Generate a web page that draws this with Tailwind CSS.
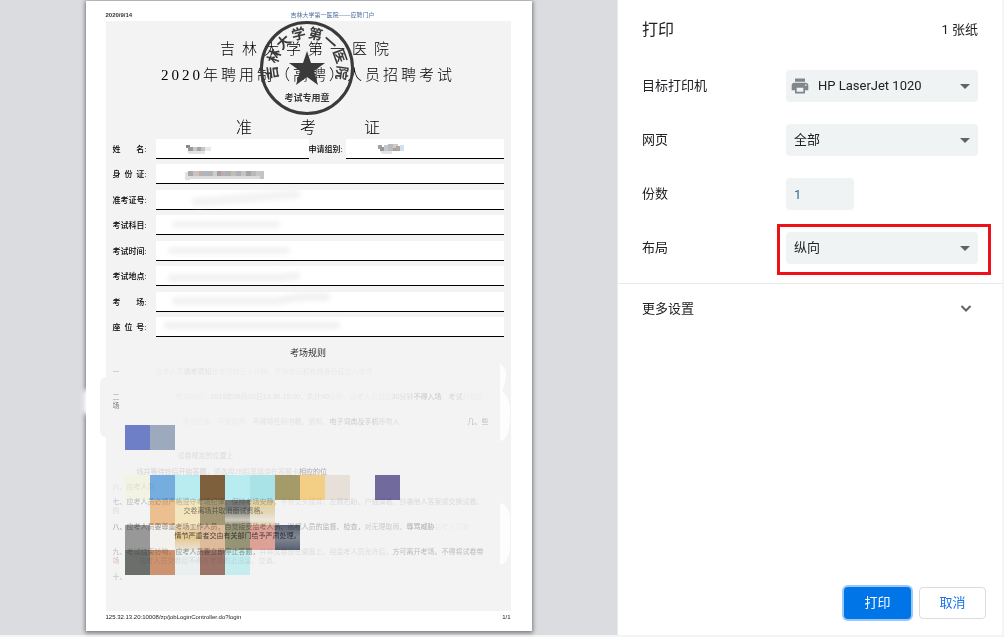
<!DOCTYPE html>
<html lang="zh-CN">
<head>
  <meta charset="UTF-8" />
  <meta name="viewport" content="width=device-width, initial-scale=1.0"/>
  <title>打印</title>
  <script src="https://cdn.jsdelivr.net/npm/@tailwindcss/browser@4"></script>
</head>
<body class="bg-[#f4f4f4] pr-[2px] pb-[2px] min-h-screen flex font-['Roboto','Noto_Sans_CJK_SC',sans-serif] text-[#202124]">

  <!-- Preview -->
  <main class="flex-1 bg-[#dadce0] border-r border-[#e8eaed] pt-px pb-1">
    <article class="relative w-[446px] min-h-[630px] mx-auto bg-white pl-5 pr-[21px] flex flex-col shadow-[0_1px_4px_1px_rgba(0,0,0,0.45)] font-['Liberation_Sans','Noto_Sans_CJK_SC',sans-serif]">
      <header class="h-5 pt-2 flex text-[6px] leading-[12px] text-black">
        <span class="w-[185px] font-bold text-[#333]">2020/9/14</span>
        <span class="text-[#4a6a9a]">吉林大学第一医院——应聘门户</span>
      </header>

      <section class="flex-1 bg-[#f3f3f3] pt-[15px] px-[7px]">
        <h1 class="text-center text-[15px] leading-[26px] text-black font-light font-['Liberation_Serif','Noto_Sans_CJK_SC',serif]">
          <span class="block tracking-[7px]">吉林大学第一医院</span>
          <span class="block tracking-[3px]">2020年聘用制（高聘）人员招聘考试</span>
        </h1>
        <h2 class="flex justify-center gap-12 mt-[30px] mb-px text-[16px] leading-[20px] font-light text-black"><span>准</span><span>考</span><span>证</span></h2>

        <!-- Form lines -->
        <dl class="h-[198px] flex flex-col justify-between text-[8px] leading-[22px] text-black font-medium">
          <div class="flex h-5">
            <dt class="w-[43px] pr-[9px] flex justify-between"><span>姓</span><span>名:</span></dt>
            <dd class="w-[153px] bg-white border-b border-black pl-7 pt-1">
              <svg width="30" height="12" viewBox="0 0 30 12"><path d="M2 2h4v3H2z" fill="#888"/><path d="M4 4h5v4H4z" fill="#999"/><path d="M9 4h4v4H9z" fill="#c5cad0"/><path d="M13 4h4v4h-4z" fill="#a5a5a5"/><path d="M17 4h4v4h-4z" fill="#c4c4c4"/><path d="M21 4h6v4h-6z" fill="#e8e8e8"/><path d="M3 8h18v3H5z" fill="#e2e4e6"/></svg>
            </dd>
            <dt class="w-[37px]">申请组别:</dt>
            <dd class="flex-1 bg-white border-b border-black pl-8 pt-1">
              <svg width="30" height="12" viewBox="0 0 30 12"><path d="M0 2h4v4H0z" fill="#b59a90"/><path d="M2 4h4v4H2z" fill="#8d99a5"/><path d="M6 2h4v6H6z" fill="#c4c8cc"/><path d="M10 1h5v7h-5z" fill="#bbb"/><path d="M15 1h5v4h-5z" fill="#ccc"/><path d="M15 5h3v3h-3z" fill="#a0a4aa"/><path d="M18 3h4v5h-4z" fill="#b5a49a"/><path d="M22 2h4v6h-4z" fill="#d3e0f4"/><path d="M2 8h12v3H4z" fill="#e4e4e4"/></svg>
            </dd>
          </div>
          <div class="flex h-5">
            <dt class="w-[43px] pr-[9px] flex justify-between"><span>身</span><span>份</span><span>证:</span></dt>
            <dd class="flex-1 bg-white border-b border-black pl-7 pt-1">
              <svg width="84" height="13" viewBox="0 0 84 13"><path d="M1 4h5v8H1z" fill="#e6dfda"/><path d="M4 3h5v5H4z" fill="#aaa"/><path d="M9 3h6v5H9z" fill="#c8c3c3"/><path d="M15 3h5v5h-5z" fill="#c3afa9"/><path d="M20 3h4v5h-4z" fill="#a9b8c0"/><path d="M24 3h5v5h-5z" fill="#b3b3b3"/><path d="M29 3h4v5h-4z" fill="#c9cdd4"/><path d="M33 3h4v5h-4z" fill="#a79fa1"/><path d="M37 3h5v5h-5z" fill="#baacaf"/><path d="M42 3h5v5h-5z" fill="#aab0b6"/><path d="M47 3h5v5h-5z" fill="#bdc1ae"/><path d="M52 3h5v5h-5z" fill="#b0b0bb"/><path d="M57 3h5v5h-5z" fill="#c4c4c4"/><path d="M62 3h5v5h-5z" fill="#a6a6a6"/><path d="M67 3h5v5h-5z" fill="#b8b8b8"/><path d="M72 3h4v5h-4z" fill="#c6c6c6"/><path d="M76 3h4v8h-4z" fill="#c4c4c4"/><path d="M6 8h70v3H6z" fill="#dcdcdc"/></svg>
            </dd>
          </div>
          <div class="flex h-5">
            <dt class="w-[43px]">准考证号:</dt>
            <dd class="flex-1 bg-white border-b border-black pl-7">
              <svg class="blur-[2px]" width="130" height="19"><path d="M12 12 L50 9 L112 4" stroke="#f3f3f3" stroke-width="9" stroke-linecap="round" fill="none"/></svg>
            </dd>
          </div>
          <div class="flex h-5">
            <dt class="w-[43px]">考试科目:</dt>
            <dd class="flex-1 bg-white border-b border-black pl-4 pt-[6px]"><span class="block w-[108px] h-[7px] rounded-full bg-[#f2f2f2] blur-[2px]"></span></dd>
          </div>
          <div class="flex h-5">
            <dt class="w-[43px]">考试时间:</dt>
            <dd class="flex-1 bg-white border-b border-black pl-3 pt-[6px]"><span class="block w-[122px] h-[7px] rounded-full bg-[#f2f2f2] blur-[2px]"></span></dd>
          </div>
          <div class="flex h-5">
            <dt class="w-[43px]">考试地点:</dt>
            <dd class="flex-1 bg-white border-b border-black pl-3">
              <svg class="blur-[2px]" width="140" height="19"><path d="M4 12 L110 12 L128 10" stroke="#f2f2f2" stroke-width="8" stroke-linecap="round" fill="none"/></svg>
            </dd>
          </div>
          <div class="flex h-5">
            <dt class="w-[43px] pr-[9px] flex justify-between"><span>考</span><span>场:</span></dt>
            <dd class="flex-1 bg-white border-b border-black pl-4">
              <svg class="blur-[2px]" width="164" height="19"><path d="M4 9 L104 9 L130 5 L154 5" stroke="#f2f2f2" stroke-width="8" stroke-linecap="round" fill="none"/></svg>
            </dd>
          </div>
          <div class="flex h-5">
            <dt class="w-[43px] pr-[9px] flex justify-between"><span>座</span><span>位</span><span>号:</span></dt>
            <dd class="flex-1 bg-white border-b border-black pl-2 pt-[5px]"><span class="block w-[176px] h-[7px] rounded-full bg-[#f0f0f0] blur-[2px]"></span></dd>
          </div>
        </dl>

        <h3 class="text-center text-[9px] leading-[12px] mt-[10px] mb-2 text-[#333]">考场规则</h3>

        <!-- Rules, mostly wiped out -->
        <div class="text-[7px] leading-[9px] whitespace-nowrap text-[#ececec] overflow-hidden">
          <p class="h-[25px]"><span class="text-[#bbb]">一</span><span class="ml-9">应考人员<span class="text-[#e2e2e2]">请考须知</span>在考试前三十分钟，凭准考证<span class="text-[#e8e8e8]">和有效身份证</span>进入考场</span></p>
          <p class="h-[25px]"><span class="text-[#999]">二</span><span class="ml-[56px]">考试时间：<span class="text-[#e4e4e4]">2019年06月20日13:30-15:00，共计90</span>分钟，应考人员迟到<span class="text-[#ddd]">30分钟</span><span class="text-[#c8c8c8]">不得入场</span>。<span class="text-[#d8d8d8]">考试</span>开始后</span><br><span class="text-[#777]">场</span></p>
          <p class="h-[25px]"><span class="ml-[70px]">考试纪律，不准喧哗、<span class="text-[#e2e2e2]">不得将任何书籍、资料、</span><span class="text-[#cdcdcd]">电子词典及手机</span><span class="text-[#dedede]">等带入</span></span><span class="ml-[68px] text-[#bbb]">几、些</span></p>
          <p class="h-[25px]"><br><span class="ml-[65px] text-[#ddd]">试卷规定的位置上</span></p>
          <p class="h-[15px]"><span class="ml-6 text-[#d5d5d5]">线并等待铃后开始答题，<span class="text-[#ddd]">须选用2B铅笔填涂在答题卡</span></span><span class="text-[#aaa]">相应的位</span></p>
          <p class="h-[15px] text-[#e0e0e0]">六、应考人员</p>
          <p class="h-[25px]"><span class="text-[#bbb]">七、应考人员必须严格遵守考场纪律，保持考场安静，</span><span class="text-[#e0e0e0]">不许交头接耳、</span><span class="text-[#dadada]">左顾右盼、户抽调看、抄袭他人答案或交换试卷、</span><br><span class="text-[#ddd]">的</span><span class="ml-16 text-[#888]">交卷离场并取消面试资格。</span></p>
          <p class="h-[25px]"><span class="text-[#999]">八、应考人员要尊重考场工作人员，自觉接受监考人员、</span><span class="text-[#b5b5b5]">巡视人员的监督、检查，</span><span class="text-[#ccc]">对无理取闹、</span><span class="text-[#b0b0b0]">辱骂威胁</span>监考人员者<br><span class="ml-[62px] text-[#555]">情节严重者交由有关部门给予严肃处理。</span></p>
          <p class="h-[25px]"><span class="text-[#bbb]">九、考试结束铃响，<span class="text-[#999]">应考人员要立即停止答题，</span></span><span class="text-[#ddd]">并将试卷放在桌面上，经监考人员允许后，</span><span class="text-[#bbb]">方可离开考场。不得将试卷带</span><br><span class="text-[#d8c0b8]">场</span><span class="ml-5 text-[#ddd]">应考人员交卷后不得在考场附近逗留、交谈。</span></p>
          <p class="text-[#bbb]">十、</p>
        </div>
      </section>

      <footer class="h-5 flex justify-between text-[6px] leading-[12px] text-[#222]">
        <span>125.32.13.20:10008/zp/jobLoginController.do?login</span>
        <span>1/1</span>
      </footer>

      <!-- Seal -->
      <svg class="absolute left-[173px] top-[19px]" width="96" height="96" viewBox="-48 -48 96 96" fill="#3a3a3a" text-anchor="middle" font-weight="700">
        <circle r="45.5" fill="none" stroke="#3a3a3a" stroke-width="3"/>
        <path d="M0-17 4-5H18L7 3 11 17 0 9-11 17-7 3-18-5H-4z"/>
        <g font-size="14">
          <text y="-30" transform="rotate(-98)">吉</text>
          <text y="-30" transform="rotate(-70)">林</text>
          <text y="-30" transform="rotate(-42)">大</text>
          <text y="-30" transform="rotate(-14)">学</text>
          <text y="-30" transform="rotate(14)">第</text>
          <text y="-30" transform="rotate(42)">一</text>
          <text y="-30" transform="rotate(70)">医</text>
          <text y="-30" transform="rotate(98)">院</text>
        </g>
        <text y="33" font-size="9">考试专用章</text>
      </svg>

      <!-- Mosaic -->
      <svg class="absolute left-[39px] top-[424px] mix-blend-multiply" width="275" height="150" viewBox="0 0 275 150">
        <defs>
          <linearGradient id="shine" x1="0" y1="0" x2="0" y2="1"><stop offset="0" stop-color="#777b78"/><stop offset=".4" stop-color="#858884"/><stop offset=".8" stop-color="#d8d5c8"/><stop offset="1" stop-color="#a59f84"/></linearGradient>
          <linearGradient id="sand" x1="0" y1="0" x2="0" y2="1"><stop offset="0" stop-color="#ecd9a6"/><stop offset=".5" stop-color="#f0e2bd"/><stop offset=".8" stop-color="#f6f3ea"/><stop offset="1" stop-color="#f0dcb4"/></linearGradient>
          <linearGradient id="slate" x1="0" y1="0" x2="0" y2="1"><stop offset="0" stop-color="#5c6476"/><stop offset=".5" stop-color="#8a909d"/><stop offset="1" stop-color="#5c6476"/></linearGradient>
          <linearGradient id="peach" x1="0" y1="0" x2="0" y2="1"><stop offset="0" stop-color="#f3ddbd"/><stop offset=".5" stop-color="#f2d295"/><stop offset="1" stop-color="#f5eee2"/></linearGradient>
        </defs>
        <path d="M0 0h25v25H0z" fill="#7385d2"/><path d="M25 0h25v25H25z" fill="#a5b2c6"/>
        <path d="M0 50h25v25H0z" fill="#ffffef"/><path d="M25 50h25v25H25z" fill="#7bb6ea"/><path d="M50 50h25v25H50z" fill="#c1f8fd"/><path d="M75 50h25v25H75z" fill="#84663f"/><path d="M100 50h25v25h-25z" fill="#c1f8fd"/><path d="M125 50h25v25h-25z" fill="#b2eff3"/><path d="M150 50h25v25h-25z" fill="#aca36d"/><path d="M175 50h25v25h-25z" fill="#ffd98c"/><path d="M200 50h25v25h-25z" fill="#f2ebe4"/><path d="M250 50h25v25h-25z" fill="#7670a5"/>
        <path d="M25 75h25v25H25z" fill="#f8c997"/><path d="M50 75h25v25H50z" fill="#fff2c8"/><path d="M75 75h25v25H75z" fill="#ada07c"/><path d="M100 75h25v25h-25z" fill="url(#shine)"/><path d="M125 75h25v25h-25z" fill="url(#sand)"/>
        <path d="M0 100h25v25H0z" fill="#a0a0a0"/><path d="M25 100h25v25H25z" fill="#fffdfa"/><path d="M50 100h25v25H50z" fill="url(#peach)"/><path d="M75 100h25v25H75z" fill="#e8c5a3"/><path d="M100 100h25v25h-25z" fill="#9d9b7c"/><path d="M125 100h25v25h-25z" fill="#e9a99f"/><path d="M150 100h25v25h-25z" fill="url(#slate)"/>
        <path d="M0 125h25v25H0z" fill="#707370"/><path d="M25 125h25v25H25z" fill="#d59a74"/><path d="M50 125h25v25H50z" fill="#f6fcfc"/><path d="M75 125h25v25H75z" fill="#a3796d"/><path d="M100 125h25v25h-25z" fill="#cff9fc"/>
      </svg>

      <!-- Eraser strokes at the page edges -->
      <span class="absolute left-[14px] top-[376px] w-[6px] h-[60px] bg-[#f3f3f3] rounded-l-md"></span>
      <span class="absolute -left-[3px] top-[388px] w-[10px] h-[26px] bg-white rounded-full blur-[2px]"></span>
      <svg class="absolute left-[414px] top-[360px]" width="11" height="210" viewBox="0 0 11 210" fill="#fdfdfd">
        <path d="M0 2Q7 8 6 16T2 30Q10 36 10 50T8 72Q5 80 0 80zM0 142Q9 144 10 156V186Q9 202 0 204z"/>
      </svg>
    </article>
  </main>

  <!-- Settings -->
  <aside class="w-96 shrink-0 bg-white flex flex-col text-[13px]">
    <div class="flex items-center justify-between px-6 h-[60px]">
      <h2 class="text-[16px]">打印</h2>
      <span>1 张纸</span>
    </div>

    <form id="settings" class="px-6 pt-[10px] pb-[19px] space-y-[22px] border-b border-[#e8eaed]">
      <div class="flex items-center justify-between">
        <label for="printer">目标打印机</label>
        <div class="relative w-48">
          <select id="printer" class="appearance-none w-full h-8 rounded bg-[#eff3f4] pl-8 pr-7">
            <option>HP LaserJet 1020</option>
          </select>
          <svg class="absolute left-1 top-[6px] pointer-events-none" width="20" height="20" viewBox="0 0 24 24" fill="#80868b"><path d="M19 8H5c-1.660 0-3 1.340-3 3v6h4v4h12v-4h4v-6c0-1.660-1.340-3-3-3zm-3 11H8v-5h8v5zm3-7c-.55 0-1-.45-1-1s.45-1 1-1 1 .45 1 1-.45 1-1 1zm-1-9H6v4h12V3z"/></svg>
          <svg class="absolute right-2 top-[14px] pointer-events-none" width="10" height="5" fill="#5f6368"><path d="M0 0h10L5 5z"/></svg>
        </div>
      </div>
      <div class="flex items-center justify-between">
        <label for="pages">网页</label>
        <div class="relative w-48">
          <select id="pages" class="appearance-none w-full h-8 rounded bg-[#eff3f4] pl-2 pr-7">
            <option>全部</option>
          </select>
          <svg class="absolute right-2 top-[14px] pointer-events-none" width="10" height="5" fill="#5f6368"><path d="M0 0h10L5 5z"/></svg>
        </div>
      </div>
      <div class="flex items-center justify-between">
        <label for="copies">份数</label>
        <div class="w-48">
          <input id="copies" type="text" value="1" class="block w-[68px] h-8 rounded bg-[#eff3f4] px-2 text-[#2b7096]"/>
        </div>
      </div>
      <div class="flex items-center justify-between">
        <label for="layout">布局</label>
        <div class="relative w-48">
          <select id="layout" class="appearance-none w-full h-8 rounded bg-[#eff3f4] pl-2 pr-7">
            <option>纵向</option>
          </select>
          <svg class="absolute right-2 top-[14px] pointer-events-none" width="10" height="5" fill="#5f6368"><path d="M0 0h10L5 5z"/></svg>
          <span class="absolute -left-[9px] -right-[13px] -top-2 -bottom-[11px] border-3 border-[#ee1119] pointer-events-none"></span>
        </div>
      </div>
    </form>

    <button type="button" class="flex items-center justify-between pl-6 pr-[30px] h-[50px]">
      更多设置
      <svg width="12" height="8" viewBox="0 0 12 8" fill="none" stroke="#5f6368" stroke-width="2"><path d="M1.500 1 6 5.500l4.500-4.500"/></svg>
    </button>

    <div class="mt-auto flex justify-end gap-2 p-4">
      <button type="submit" form="settings" class="w-[67px] h-8 rounded bg-[#0075e8] text-white ring-2 ring-[#99c8fa]">打印</button>
      <button type="button" class="w-[67px] h-8 rounded border border-[#dadce0] text-[#1a73e8]">取消</button>
    </div>
  </aside>

</body>
</html>
